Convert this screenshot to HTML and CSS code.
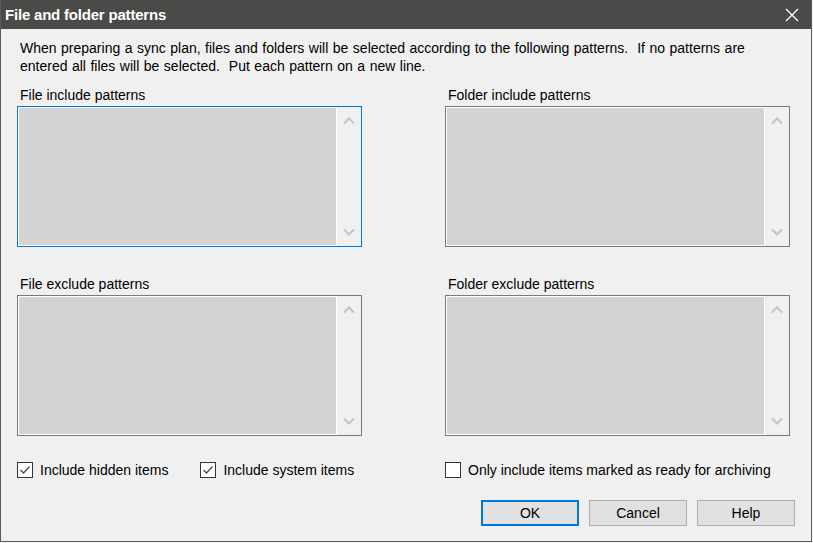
FILE: index.html
```html
<!DOCTYPE html>
<html lang="en">
<head>
    <meta charset="UTF-8">
    <title>File and folder patterns</title>
    <link rel="stylesheet" href="styles.css">
</head>
<body>
    <div class="window">
        <div class="titlebar">
            <span class="title">File and folder patterns</span>
            <svg class="close" width="14" height="14" viewBox="0 0 14 14">
                <path d="M1 1 L13 13 M13 1 L1 13" stroke="#ffffff" stroke-width="1.3" fill="none"/>
            </svg>
        </div>

        <div class="content">
            <p class="intro">When preparing a sync plan, files and folders will be selected according to the following patterns.&nbsp; If no patterns are<br>entered all files will be selected.&nbsp; Put each pattern on a new line.</p>

            <div class="patterns">
                <div class="group">
                    <label>File include patterns</label>
                    <div class="pattern-box focused">
                        <div class="field"></div>
                        <div class="scroll">
                            <svg width="12" height="8" viewBox="0 0 12 8"><path d="M1 6.5 L6 1.5 L11 6.5" stroke="#c4c4c4" stroke-width="2" fill="none"/></svg>
                            <svg width="12" height="8" viewBox="0 0 12 8"><path d="M1 1.5 L6 6.5 L11 1.5" stroke="#c4c4c4" stroke-width="2" fill="none"/></svg>
                        </div>
                    </div>
                </div>
                <div class="group">
                    <label>Folder include patterns</label>
                    <div class="pattern-box">
                        <div class="field"></div>
                        <div class="scroll">
                            <svg width="12" height="8" viewBox="0 0 12 8"><path d="M1 6.5 L6 1.5 L11 6.5" stroke="#c4c4c4" stroke-width="2" fill="none"/></svg>
                            <svg width="12" height="8" viewBox="0 0 12 8"><path d="M1 1.5 L6 6.5 L11 1.5" stroke="#c4c4c4" stroke-width="2" fill="none"/></svg>
                        </div>
                    </div>
                </div>
                <div class="group lower">
                    <label>File exclude patterns</label>
                    <div class="pattern-box">
                        <div class="field"></div>
                        <div class="scroll">
                            <svg width="12" height="8" viewBox="0 0 12 8"><path d="M1 6.5 L6 1.5 L11 6.5" stroke="#c4c4c4" stroke-width="2" fill="none"/></svg>
                            <svg width="12" height="8" viewBox="0 0 12 8"><path d="M1 1.5 L6 6.5 L11 1.5" stroke="#c4c4c4" stroke-width="2" fill="none"/></svg>
                        </div>
                    </div>
                </div>
                <div class="group lower">
                    <label>Folder exclude patterns</label>
                    <div class="pattern-box">
                        <div class="field"></div>
                        <div class="scroll">
                            <svg width="12" height="8" viewBox="0 0 12 8"><path d="M1 6.5 L6 1.5 L11 6.5" stroke="#c4c4c4" stroke-width="2" fill="none"/></svg>
                            <svg width="12" height="8" viewBox="0 0 12 8"><path d="M1 1.5 L6 6.5 L11 1.5" stroke="#c4c4c4" stroke-width="2" fill="none"/></svg>
                        </div>
                    </div>
                </div>
            </div>

            <div class="options">
                <div class="option-pair">
                    <div class="check">
                        <span class="box"><svg width="14" height="14" viewBox="0 0 14 14"><path d="M2.5 7 L5.5 10 L11.5 3.5" stroke="#4a4a4a" stroke-width="1.3" fill="none"/></svg></span>
                        <span>Include hidden items</span>
                    </div>
                    <div class="check">
                        <span class="box"><svg width="14" height="14" viewBox="0 0 14 14"><path d="M2.5 7 L5.5 10 L11.5 3.5" stroke="#4a4a4a" stroke-width="1.3" fill="none"/></svg></span>
                        <span>Include system items</span>
                    </div>
                </div>
                <div class="check">
                    <span class="box"></span>
                    <span>Only include items marked as ready for archiving</span>
                </div>
            </div>

            <div class="buttons">
                <button class="default">OK</button>
                <button>Cancel</button>
                <button>Help</button>
            </div>
        </div>
    </div>
</body>
</html>
```

FILE: styles.css
```css
body {
    margin: 0;
    background-color: #f0f0f0;
    font-family: "Liberation Sans", Arial, sans-serif;
    font-size: 14px;
    color: #000000;
}

.window {
    width: 810px;
    height: 541px;
    border: 1px solid #5c5c5c;
    border-top: none;
    background-color: #f0f0f0;
}

.titlebar {
    height: 29px;
    background-color: #4a4a48;
    display: flex;
    align-items: center;
    justify-content: space-between;
    padding: 0 12px 0 4px;
}

.title {
    color: #ffffff;
    font-weight: bold;
    font-size: 15px;
    letter-spacing: -0.2px;
}

.close {
    display: block;
}

.content {
    padding: 10px 21px 0 16px;
}

.intro {
    margin: 0 0 0 3px;
    line-height: 18px;
    white-space: nowrap;
    word-spacing: 0.6px;
}

.patterns {
    display: grid;
    grid-template-columns: 345px 345px;
    column-gap: 83px;
    margin-top: 11px;
}

.group label {
    display: block;
    line-height: 18px;
    padding-left: 3px;
    margin-bottom: 2px;
}

.group.lower {
    margin-top: 28px;
}

.pattern-box {
    height: 137px;
    border: 1px solid #7a7a7a;
    padding: 1px 0 1px 1px;
    background-color: #ffffff;
    display: flex;
}

.pattern-box.focused {
    border-color: #0078d7;
}

.field {
    flex: 1;
    background-color: #d3d3d3;
}

.scroll {
    width: 24px;
    margin-left: 1px;
    margin-top: -1px;
    margin-bottom: -1px;
    background-color: #f0f0f0;
    display: flex;
    flex-direction: column;
    justify-content: space-between;
    align-items: center;
    padding: 10px 0;
}

.scroll svg {
    display: block;
}

.options {
    display: grid;
    grid-template-columns: 345px 345px;
    column-gap: 83px;
    margin-top: 25px;
}

.option-pair {
    display: flex;
    gap: 32px;
}

.check {
    display: flex;
    align-items: center;
    gap: 7px;
    line-height: 18px;
}

.box {
    width: 14px;
    height: 14px;
    border: 1px solid #333333;
    background-color: #ffffff;
    display: block;
}

.box svg {
    display: block;
}

.buttons {
    display: flex;
    justify-content: flex-end;
    gap: 10px;
    margin-top: 21px;
    margin-right: -5px;
}

button {
    width: 98px;
    height: 26px;
    background-color: #e1e1e1;
    border: 1px solid #adadad;
    font-family: "Liberation Sans", Arial, sans-serif;
    font-size: 14px;
    color: #000000;
    padding: 0;
}

button.default {
    border: 2px solid #0078d7;
}
```
